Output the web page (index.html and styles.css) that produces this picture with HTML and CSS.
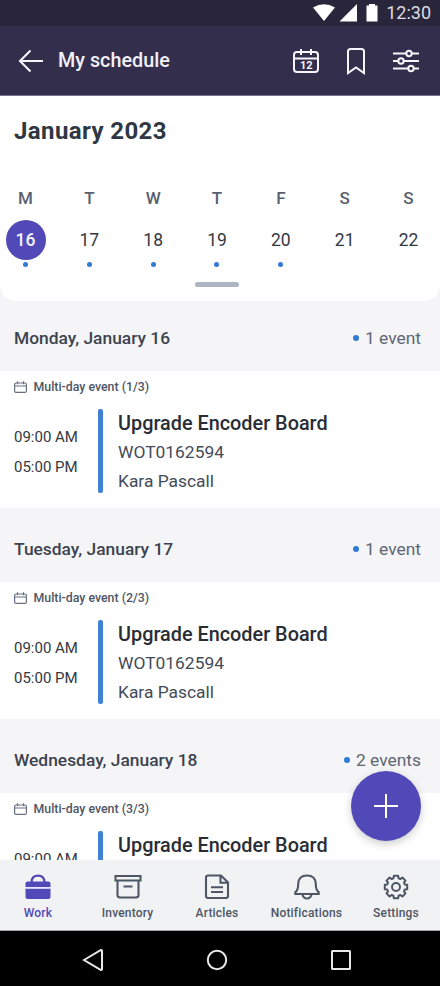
FILE: index.html
```html
<!DOCTYPE html>
<html lang="en">
<head>
<meta charset="utf-8">
<title>My schedule</title>
<link rel="stylesheet" href="styles.css">
</head>
<body>
<div class="phone">
  <div class="status">
    <svg width="66" height="20" viewBox="0 0 66 20" fill="#fff"><path d="M0 5.500Q11 -1 22 5.500L11 19z"/><path d="M44 2v17.500H26.500z"/><path d="M53.500 3.500h2.500V2h6v1.500h2.500v16h-11z"/></svg>
    <span>12:30</span>
  </div>
  <header class="topbar">
    <svg class="back" width="26" height="24" viewBox="0 0 26 24" fill="none" stroke="#f6f5fa" stroke-width="2.100"><path d="M25 12H2M12.500 1.500L2 12l10.500 10.500"/></svg>
    <h1>My schedule</h1>
    <div class="actions">
      <svg width="26" height="26" viewBox="0 0 26 26" fill="none" stroke="#f6f5fa" stroke-width="2"><rect x="1" y="4" width="24" height="20" rx="3"/><path d="M1 10.500h24M8 1v6M18 1v6"/><text class="cal-num" x="13.200" y="21.200">12</text></svg>
      <svg width="20" height="28" viewBox="0 0 20 28" fill="none" stroke="#f6f5fa" stroke-width="2"><path d="M2 26V4.500Q2 2 4.500 2h11Q18 2 18 4.500V26l-8-5.500z"/></svg>
      <svg width="26" height="24" viewBox="0 0 26 24" fill="none" stroke="#f6f5fa" stroke-width="2"><path d="M0 4.500h13M19 4.500h7M0 12h5M11 12h15M0 19.500h15M21 19.500h5"/><circle cx="16" cy="4.500" r="2.700"/><circle cx="8" cy="12" r="2.700"/><circle cx="18" cy="19.500" r="2.700"/></svg>
    </div>
  </header>
  <main class="content">
    <section class="calendar">
      <h2>January 2023</h2>
      <div class="week">
        <div class="day selected dot"><b>M</b><span>16</span></div>
        <div class="day dot"><b>T</b><span>17</span></div>
        <div class="day dot"><b>W</b><span>18</span></div>
        <div class="day dot"><b>T</b><span>19</span></div>
        <div class="day dot"><b>F</b><span>20</span></div>
        <div class="day"><b>S</b><span>21</span></div>
        <div class="day"><b>S</b><span>22</span></div>
      </div>
      <div class="handle"></div>
    </section>

    <section class="group first">
      <div class="group-head"><h3>Monday, January 16</h3><span class="count">1 event</span></div>
      <article class="event">
        <div class="multi"><svg width="13" height="12" viewBox="0 0 13 12"><rect x=".6" y="2" width="11.800" height="9.400" rx="1.500"/><path d="M.6 5h11.800M3.500 .3v3M9.500 .3v3"/></svg>Multi-day event (1/3)</div>
        <div class="row"><div class="times"><span>09:00 AM</span><span>05:00 PM</span></div><div class="bar"></div><div class="details"><h4>Upgrade Encoder Board</h4><p>WOT0162594</p><p>Kara Pascall</p></div></div>
      </article>
    </section>
    <section class="group">
      <div class="group-head"><h3>Tuesday, January 17</h3><span class="count">1 event</span></div>
      <article class="event">
        <div class="multi"><svg width="13" height="12" viewBox="0 0 13 12"><rect x=".6" y="2" width="11.800" height="9.400" rx="1.500"/><path d="M.6 5h11.800M3.500 .3v3M9.500 .3v3"/></svg>Multi-day event (2/3)</div>
        <div class="row"><div class="times"><span>09:00 AM</span><span>05:00 PM</span></div><div class="bar"></div><div class="details"><h4>Upgrade Encoder Board</h4><p>WOT0162594</p><p>Kara Pascall</p></div></div>
      </article>
    </section>
    <section class="group">
      <div class="group-head"><h3>Wednesday, January 18</h3><span class="count">2 events</span></div>
      <article class="event">
        <div class="multi"><svg width="13" height="12" viewBox="0 0 13 12"><rect x=".6" y="2" width="11.800" height="9.400" rx="1.500"/><path d="M.6 5h11.800M3.500 .3v3M9.500 .3v3"/></svg>Multi-day event (3/3)</div>
        <div class="row"><div class="times"><span>09:00 AM</span></div><div class="bar"></div><div class="details"><h4>Upgrade Encoder Board</h4></div></div>
      </article>
    </section>
    <button class="fab" aria-label="Add"><svg width="24" height="24" viewBox="0 0 24 24" stroke="#fff" stroke-width="2"><path d="M12 0v24M0 12h24"/></svg></button>
  </main>
  <nav class="tabs">
    <div class="tab active"><svg width="28" height="28" viewBox="0 0 28 28"><path d="M7.500 9Q8 2.700 14 2.700T20.500 9" fill="none" stroke="#5149b8" stroke-width="2.200"/><path d="M3.500 8.500h21q2 0 2 2v3.500h-25v-3.500q0-2 2-2zM1.500 15.500h25v8.500q0 2-2 2h-21q-2 0-2-2z" fill="#5149b8"/><path d="M2 14.800h24" stroke="#e9e8f8" stroke-width="1.600"/></svg><span>Work</span></div>
    <div class="tab"><svg width="28" height="28" viewBox="0 0 28 28"><path d="M1.500 3h25v4.500h-25zM3.500 7.500v14.500q0 2.500 2.500 2.500h16q2.500 0 2.500-2.500V7.500M9.500 13.500h9"/></svg><span>Inventory</span></div>
    <div class="tab"><svg width="28" height="28" viewBox="0 0 28 28"><path d="M5 2.500h13L25 9.500V23q0 2-2 2H5q-2 0-2-2V4.500q0-2 2-2zM17.500 2.500V9.800H25M8 14.300h12M8 19h12"/></svg><span>Articles</span></div>
    <div class="tab"><svg width="28" height="28" viewBox="0 0 28 28"><path d="M2.300 19.200Q5.200 17 5.200 11Q5.500 2.500 14 2.500T22.800 11Q22.800 17 25.700 19.200V21H2.300zM9.500 21.500Q10.500 25.500 14 25.500T18.500 21.500"/></svg><span>Notifications</span></div>
    <div class="tab"><svg width="28" height="28" viewBox="0 0 28 28"><g transform="translate(14 14) scale(.95)" stroke-linejoin="round"><path d="M-2.650-9.230L-2.300-11.800L2.300-11.800L2.650-9.230L4.650-8.400L6.720-9.970L9.970-6.720L8.400-4.650L9.230-2.650L11.800-2.300L11.800 2.300L9.230 2.650L8.400 4.650L9.970 6.720L6.720 9.970L4.650 8.400L2.650 9.230L2.300 11.800L-2.300 11.800L-2.650 9.230L-4.650 8.400L-6.720 9.970L-9.970 6.720L-8.400 4.650L-9.230 2.650L-11.800 2.300L-11.800-2.300L-9.230-2.650L-8.400-4.650L-9.970-6.720L-6.720-9.970L-4.650-8.400z"/><circle r="4.200"/></g></svg><span>Settings</span></div>
  </nav>
  <div class="system">
    <svg width="22" height="24" viewBox="0 0 22 24"><path d="M2 12L19 2Q20 1.800 20 3v18q0 1.200-1 1z"/></svg>
    <svg width="22" height="22" viewBox="0 0 22 22"><circle cx="11" cy="11" r="9.200"/></svg>
    <svg width="22" height="22" viewBox="0 0 22 22"><rect x="2" y="2" width="18" height="18" rx=".5"/></svg>
  </div>
</div>
</body>
</html>
```
FILE: styles.css
```css
* { box-sizing: border-box; }
body { margin: 0; font-family: Roboto, "Liberation Sans", sans-serif; color: #303744; background: #fff; }
h1, h2, h3, h4, p { margin: 0; font-weight: 500; white-space: nowrap; }
svg { display: block; flex: none; }
.phone { width: 440px; height: 986px; display: flex; flex-direction: column; overflow: hidden; }
.status { height: 26px; flex: none; background: #29263b; display: flex; justify-content: flex-end; align-items: center; gap: 7.500px; padding-right: 9px; color: #dddce2; font-size: 18px; line-height: 26px; }
.status svg { margin-top: -2px; }
.topbar { height: 70px; flex: none; background: #332e4c; border-bottom: 1px solid #77738a; display: flex; align-items: center; padding: 0 21px 0 18px; }
.topbar h1 { font-size: 19.800px; margin-left: 14px; color: #f1f0f5; }
.actions { display: flex; align-items: center; gap: 27px; margin-left: auto; }
.cal-num { font-size: 11px; font-weight: 700; text-anchor: middle; fill: #f6f5fa; stroke: none; }
.content { flex: 1; min-height: 0; overflow: hidden; position: relative; background: #f5f5f7; }
.calendar { height: 205px; background: #fff; border-radius: 0 0 16px 16px; padding-top: 20px; }
.calendar h2 { font-size: 24px; line-height: 30px; font-weight: 700; letter-spacing: .4px; margin-left: 14px; }
.week { display: flex; justify-content: space-between; padding: 0 11.500px 0 5.500px; margin-top: 41px; }
.day { width: 40px; height: 85px; display: flex; flex-direction: column; align-items: center; }
.day b { font-size: 17px; line-height: 22px; font-weight: 500; color: #596170; }
.day span { width: 40px; height: 40px; margin-top: 11px; border-radius: 50%; text-align: center; font-size: 17.500px; line-height: 41px; color: #35383f; }
.day.selected span { background: #5149b8; color: #f1f0ff; font-weight: 500; line-height: 40px; }
.day.dot::after { content: ""; width: 5px; height: 5px; margin-top: 2px; border-radius: 50%; background: #2f7bd6; }
.handle { width: 44px; height: 5px; border-radius: 3px; background: #afb4c1; margin: 9.500px 0 0 195px; }
.group-head { height: 74px; display: flex; align-items: center; justify-content: space-between; padding: 8px 19px 0 14px; }
.first .group-head { height: 70px; padding-top: 4px; }
.group-head h3 { font-size: 17.400px; color: #3c4350; }
.count { display: flex; align-items: center; gap: 6px; font-size: 17.400px; color: #5e6674; }
.count::before { content: ""; width: 6px; height: 6px; border-radius: 50%; background: #2f7bd6; }
.event { height: 137px; background: #fff; padding: 7px 0 0 14px; }
.multi { height: 18px; display: flex; align-items: center; gap: 6.500px; font-size: 12.350px; font-weight: 500; color: #4e5665; }
.multi svg { fill: none; stroke: #687080; stroke-width: 1.200; }
.row { display: flex; height: 84px; margin-top: 13px; }
.times { width: 84px; display: flex; flex-direction: column; padding-top: 13px; font-size: 15px; line-height: 30px; color: #343840; }
.bar { width: 5px; height: 84px; border-radius: 2px; background: #3f82d4; }
.details { margin-left: 15px; }
.details h4 { font-size: 19.850px; line-height: 29px; color: #292d35; }
.details p { font-size: 17.400px; line-height: 28.500px; font-weight: 400; color: #444b58; }
.fab { position: absolute; right: 19px; bottom: 19px; width: 70px; height: 70px; padding: 0; border: 0; border-radius: 50%; background: #5149b8; display: flex; align-items: center; justify-content: center; box-shadow: 0 3px 8px rgba(0,0,0,.2); }
.tabs { height: 71px; flex: none; background: #f1f2f4; border-bottom: 1px solid #a5a6a8; display: flex; justify-content: space-between; padding: 13px 6px 0 0; }
.tab { width: 76px; display: flex; flex-direction: column; align-items: center; color: #4e5665; font-size: 12px; letter-spacing: .18px; font-weight: 500; line-height: 16px; }
.tab svg { fill: none; stroke: #4e5665; stroke-width: 2.100; margin-bottom: 4px; }
.tab.active { color: #5149b8; }
.tab.active svg { stroke: none; }
.system { height: 55px; flex: none; background: #000; display: flex; justify-content: space-between; align-items: center; padding: 3px 88px 0 82px; }
.system svg { fill: none; stroke: #e8e8e8; stroke-width: 2; }
```
